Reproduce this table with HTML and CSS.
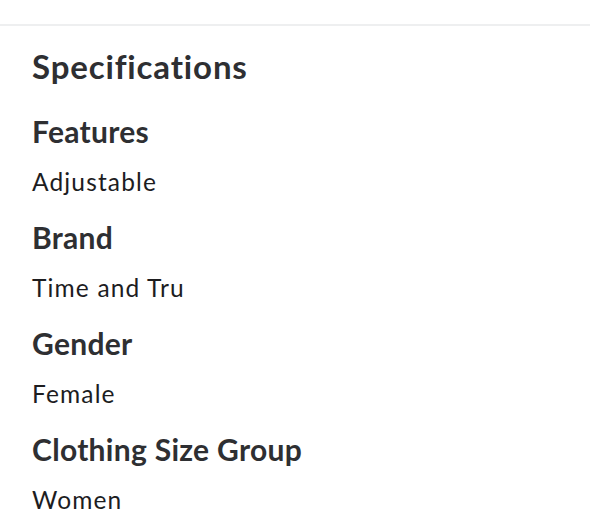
FILE: index.html
```html
<!DOCTYPE html>
<html>
<head>
<meta charset="utf-8">
<link rel="stylesheet" href="styles.css">
</head>
<body>
<div class="topbar"></div>
<section class="specs">
  <h2 class="specs-title">Specifications</h2>
  <dl class="spec-list">
    <div class="spec">
      <dt class="spec-name">Features</dt>
      <dd class="spec-value">Adjustable</dd>
    </div>
    <div class="spec">
      <dt class="spec-name">Brand</dt>
      <dd class="spec-value">Time and Tru</dd>
    </div>
    <div class="spec">
      <dt class="spec-name">Gender</dt>
      <dd class="spec-value">Female</dd>
    </div>
    <div class="spec">
      <dt class="spec-name">Clothing Size Group</dt>
      <dd class="spec-value">Women</dd>
    </div>
  </dl>
</section>
</body>
</html>
```
FILE: styles.css
```css
html, body {
  margin: 0;
  padding: 0;
  background: #ffffff;
}
body {
  font-family: Lato, "Open Sans", sans-serif;
  color: #2e2f32;
}
.topbar {
  height: 24px;
  border-bottom: 2px solid #eeeff0;
}
.specs {
  padding: 20px 32px 0;
}
.specs-title {
  margin: 0;
  font-size: 33px;
  line-height: 40px;
  font-weight: 700;
  letter-spacing: 0.85px;
}
.spec-list {
  margin: 0;
  display: flex;
  flex-direction: column;
  gap: 21px;
  padding-top: 27px;
}
.spec {
  display: flex;
  flex-direction: column;
  gap: 17px;
}
.spec-name {
  margin: 0;
  font-size: 30px;
  line-height: 36px;
  font-weight: 700;
  letter-spacing: 0.3px;
}
.spec-value {
  margin: 0;
  font-size: 24.5px;
  line-height: 32px;
  letter-spacing: 1.15px;
  color: #1d1d1f;
}
```
